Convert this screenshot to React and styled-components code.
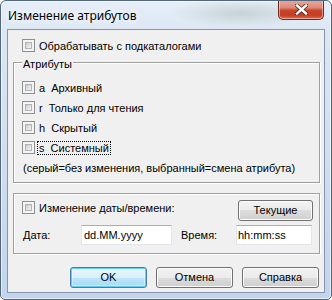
import React from "react";
import styled, { createGlobalStyle } from "styled-components";

const Global = createGlobalStyle`
  html, body { margin: 0; padding: 0; background: #ffffff; }
  body { width: 332px; height: 300px; overflow: hidden; }
  * { box-sizing: border-box; }
`;

const UI = `"Liberation Sans", Arial, sans-serif`;

const Window = styled.div`
  width: 332px;
  height: 300px;
  display: flex;
  flex-direction: column;
  border: 1px solid #52667f;
  border-radius: 6px 6px 5px 5px;
  overflow: hidden;
  background:
    radial-gradient(ellipse 70px 14px at 240px 12px, rgba(150, 165, 150, 0.35), rgba(150, 165, 150, 0) 100%),
    linear-gradient(180deg, #e6eef8 0%, #dbe6f3 12%, #cddcef 60%, #c2d5ec 100%);
  box-shadow: inset 0 0 0 1px rgba(255, 255, 255, 0.6);
  font-family: ${UI};
  font-size: 11px;
  color: #000;
`;

const TitleBar = styled.div`
  height: 28px;
  flex: none;
  display: flex;
  align-items: flex-start;
  padding-left: 7px;
`;

const Title = styled.div`
  padding-top: 7px;
  font-family: "Noto Sans", "Open Sans", sans-serif;
  font-size: 12px;
  line-height: 16px;
  color: #000;
  text-shadow: 0 0 6px #ffffff, 0 0 10px #ffffff;
`;

const CloseButton = styled.div`
  margin-left: auto;
  margin-right: 7px;
  margin-top: -1px;
  width: 46px;
  height: 20px;
  display: flex;
  align-items: center;
  justify-content: center;
  border: 1px solid #6b2a22;
  border-top: none;
  border-radius: 0 0 5px 5px;
  background: linear-gradient(180deg, #e9a99b 0%, #dc8a78 40%, #c8452e 55%, #c53d22 80%, #d8704f 100%);
  box-shadow: inset 0 0 0 1px rgba(255, 220, 210, 0.55);
`;

const Client = styled.div`
  flex: 1;
  margin: 0 6px 6px 6px;
  border: 1px solid #8296b0;
  background: #f0f0f0;
  display: flex;
  flex-direction: column;
  padding: 0 4px 0 5px;
`;

const CheckRow = styled.label`
  display: flex;
  align-items: center;
  height: 13px;
  padding-left: ${(p) => p.$indent || 0}px;
  margin-top: ${(p) => p.$top || 0}px;
  white-space: pre;
  line-height: 13px;
`;

const Box = styled.span`
  width: 13px;
  height: 13px;
  flex: none;
  border: 1px solid #8e8f8f;
  background: #f4f4f4;
  padding: 2px;
  display: flex;
  &::after {
    content: "";
    flex: 1;
    border: 1px solid #b0b3b8;
    background: linear-gradient(135deg, #c6cacf 0%, #dfe1e4 50%, #f6f6f6 100%);
  }
`;

const Label = styled.span`
  margin-left: 2px;
  padding: 0 1px;
  height: 14px;
  line-height: 12px;
  border: 1px dotted ${(p) => (p.$focus ? "#000" : "transparent")};
`;

const Group = styled.div`
  position: relative;
  margin-top: 10px;
  border: 1px solid #a0a0a0;
  box-shadow: inset 1px 1px 0 #ffffff, 1px 1px 0 #ffffff;
  padding: ${(p) => p.$pad};
  display: flex;
  flex-direction: column;
`;

const Legend = styled.span`
  position: absolute;
  left: 8px;
  top: -5px;
  padding: 0 1px;
  background: #f0f0f0;
  line-height: 13px;
`;

const AttrList = styled.div`
  display: flex;
  flex-direction: column;
  gap: 7px;
  padding-left: 8px;
`;

const Note = styled.div`
  margin-top: 8px;
  padding-left: 9px;
  line-height: 13px;
  white-space: nowrap;
`;

const TopRow = styled.div`
  display: flex;
  align-items: flex-start;
  justify-content: space-between;
  padding-left: 8px;
  padding-right: 6px;
  height: 21px;
  & > label {
    margin-top: 1px;
  }
`;

const Fields = styled.div`
  margin-top: 4px;
  display: grid;
  grid-template-columns: 58px 91px 64px 76px;
  align-items: center;
  padding-left: 9px;
  & > span:nth-of-type(2) {
    padding-left: 9px;
  }
`;

const FieldLabel = styled.span`
  line-height: 13px;
  white-space: nowrap;
`;

const Input = styled.div`
  height: 20px;
  background: #ffffff;
  border: 1px solid #e2e6ec;
  border-top-color: #abadb3;
  display: flex;
  align-items: center;
  padding-left: ${(p) => p.$pl}px;
  line-height: 13px;
`;

const Button = styled.div`
  width: ${(p) => p.$w || 77}px;
  height: 21px;
  display: flex;
  align-items: center;
  justify-content: center;
  border: 1px solid ${(p) => (p.$default ? "#3c7fb1" : "#707070")};
  border-radius: 3px;
  background: ${(p) =>
    p.$default
      ? "linear-gradient(180deg, #eaf6fd 0%, #d9f0fc 50%, #bee6fd 50%, #a7d9f5 100%)"
      : "linear-gradient(180deg, #f2f2f2 0%, #ebebeb 50%, #dddddd 50%, #cfcfcf 100%)"};
  box-shadow: ${(p) =>
    p.$default ? "inset 0 0 0 1px #5ecff7, inset 0 0 0 2px rgba(255,255,255,0.35)" : "inset 0 0 0 1px #fcfcfc"};
  line-height: 13px;
  padding-bottom: 1px;
`;

const ButtonBar = styled.div`
  margin-top: 13px;
  display: flex;
  justify-content: flex-end;
  gap: 9px;
  padding-right: 1px;
`;

function CloseGlyph() {
  return (
    <svg width="13" height="11" viewBox="0 0 13 11" style={{ marginTop: "-1px" }}>
      <path d="M2 1.5 L11 9.5 M11 1.5 L2 9.5" stroke="#4b2420" strokeWidth="4.2" strokeLinecap="square" opacity="0.85" />
      <path d="M2 1.5 L11 9.5 M11 1.5 L2 9.5" stroke="#ffffff" strokeWidth="2.4" strokeLinecap="square" />
    </svg>
  );
}

function Check({ children, indent, top, focus }) {
  return (
    <CheckRow $indent={indent} $top={top}>
      <Box />
      <Label $focus={focus}>{children}</Label>
    </CheckRow>
  );
}

export default function App() {
  return (
    <>
      <Global />
      <Window>
        <TitleBar>
          <Title>Изменение атрибутов</Title>
          <CloseButton>
            <CloseGlyph />
          </CloseButton>
        </TitleBar>
        <Client>
          <Check indent={9} top={9}>Обрабатывать с подкаталогами</Check>
          <Group $pad="18px 0 7px 0">
            <Legend>Атрибуты</Legend>
            <AttrList>
              <Check>{"a  Архивный"}</Check>
              <Check>{"r  Только для чтения"}</Check>
              <Check>{"h  Скрытый"}</Check>
              <Check focus>{"s  Системный"}</Check>
            </AttrList>
            <Note>(серый=без изменения, выбранный=смена атрибута)</Note>
          </Group>
          <Group $pad="6px 0 8px 0">
            <TopRow>
              <Check>Изменение даты/времени:</Check>
              <Button $w={75}>Текущие</Button>
            </TopRow>
            <Fields>
              <FieldLabel>Дата:</FieldLabel>
              <Input $pl={2}>dd.MM.yyyy</Input>
              <FieldLabel>Время:</FieldLabel>
              <Input $pl={1}>hh:mm:ss</Input>
            </Fields>
          </Group>
          <ButtonBar>
            <Button $default>OK</Button>
            <Button>Отмена</Button>
            <Button>Справка</Button>
          </ButtonBar>
        </Client>
      </Window>
    </>
  );
}
